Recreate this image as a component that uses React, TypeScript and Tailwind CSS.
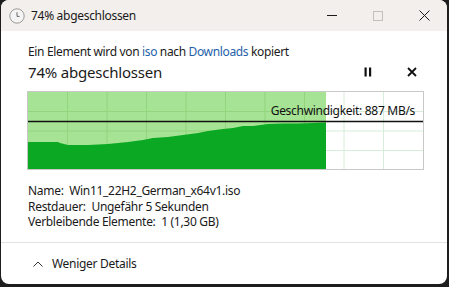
import React from "react";

const font = { fontFamily: '"Segoe UI", "Noto Sans", sans-serif' };

function Chart() {
  const W = 395;
  const H = 77;
  const verts = [39.5, 79, 118.5, 158, 197.5, 237, 276.5, 316, 355.5];
  const horiz = [19.5, 39, 58.5];
  const pts: [number, number][] = [
    [0, 50], [30, 50], [32, 51], [40, 53], [60, 53], [80, 52], [100, 50], [115, 48], [125, 46], [140, 45], [155, 43], [170, 41], [180, 39], [195, 37], [205, 36], [215, 34], [225, 34], [240, 32], [255, 31.5], [270, 31.5], [285, 31], [298, 30.5],
  ];
  const d =
    "M0 " + H + " " + pts.map(([x, y]) => `L${x} ${y}`).join(" ") + ` L298 ${H} Z`;
  return (
    <div className="relative mt-[8px] ml-[26px] h-[79px] w-[397px] border border-[#c8c8c8] bg-white">
      <svg width={W} height={H} className="block">
        <rect x={0} y={0} width={298} height={H} fill="#a6e394" />
        {verts.map((x) => (
          <line key={x} x1={x} y1={0} x2={x} y2={H} stroke={x < 298 ? "#93d47f" : "#d7ecd9"} strokeWidth={1} />
        ))}
        {horiz.map((y) => (
          <g key={y}>
            <line x1={0} y1={y} x2={298} y2={y} stroke="#93d47f" strokeWidth={1} />
            <line x1={298} y1={y} x2={W} y2={y} stroke="#d7ecd9" strokeWidth={1} />
          </g>
        ))}
        <path d={d} fill="#0aa823" />
        <line x1={0} y1={29.5} x2={W} y2={29.5} stroke="#111" strokeWidth={1.3} />
      </svg>
      <div className="absolute right-[8px] top-[12px] text-[12px] leading-[14px] tracking-[-0.3px] text-[#111]" style={font}>
        Geschwindigkeit: 887 MB/s
      </div>
    </div>
  );
}

export default function App() {
  return (
    <div className="h-[287px] w-[449px] bg-[#1d1d1d] pl-[1px] pr-[2px] pb-[3px]" style={font}>
      <div className="flex h-full flex-col overflow-hidden rounded-[8px] bg-white text-[#1a1a1a]">
        {/* title bar */}
        <div className="flex h-[31px] items-center bg-[#f3efec] pl-[8px]">
          <svg width="16" height="16" viewBox="0 0 16 16" className="mr-[6px]">
            <circle cx="8" cy="8" r="7.2" fill="#f4f4f4" stroke="#9a9a9a" strokeWidth="1" />
            <path d="M8 4.2V8.4H10.6" fill="none" stroke="#6a6a6a" strokeWidth="1" />
          </svg>
          <span className="text-[12px] tracking-[-0.3px] text-[#1a1a1a]">74% abgeschlossen</span>
          <div className="ml-auto flex h-full items-center">
            <div className="flex h-full w-[46px] items-center justify-center">
              <div className="h-[1px] w-[10px] bg-[#1a1a1a]" />
            </div>
            <div className="flex h-full w-[46px] items-center justify-center">
              <div className="h-[10px] w-[10px] border border-[#c4c0be]" />
            </div>
            <div className="flex h-full w-[46px] items-center justify-center">
              <svg width="11" height="11" viewBox="0 0 11 11">
                <path d="M0.5 0.5L10.5 10.5M10.5 0.5L0.5 10.5" stroke="#1a1a1a" strokeWidth="1" />
              </svg>
            </div>
          </div>
        </div>

        {/* content */}
        <div className="flex flex-1 flex-col">
          <div className="mt-[13px] pl-[27px] text-[12px] leading-[16px] tracking-[-0.35px]">
            Ein Element wird von <span className="text-[#1f5faa]">iso</span> nach{" "}
            <span className="text-[#1f5faa]">Downloads</span> kopiert
          </div>
          <div className="mt-[1px] flex items-center pl-[27px] pr-[30px]">
            <span className="text-[15px] leading-[22px] tracking-[-0.2px]">74% abgeschlossen</span>
            <div className="ml-auto flex items-center gap-[35px]">
              <svg width="8" height="10" viewBox="0 0 8 10">
                <rect x="0.5" y="0.5" width="2.2" height="9" fill="#111" />
                <rect x="5" y="0.5" width="2.2" height="9" fill="#111" />
              </svg>
              <svg width="10" height="10" viewBox="0 0 10 10">
                <path d="M1 1L9 9M9 1L1 9" stroke="#111" strokeWidth="1.8" />
              </svg>
            </div>
          </div>
          <Chart />
          <div className="mt-[13px] pl-[27px] text-[12px] leading-[15.5px] tracking-[-0.3px]">
            <div>Name:&nbsp; Win11_22H2_German_x64v1.iso</div>
            <div>Restdauer:&nbsp; Ungefähr 5 Sekunden</div>
            <div>Verbleibende Elemente:&nbsp; 1 (1,30 GB)</div>
          </div>
        </div>

        <div className="flex h-[42px] items-center border-t border-[#e3e3e3] pl-[31px]">
          <svg width="12" height="8" viewBox="0 0 12 8" className="mr-[8px]">
            <path d="M1.5 6.5L6 2L10.5 6.5" fill="none" stroke="#333" strokeWidth="1" />
          </svg>
          <span className="text-[12px] tracking-[-0.3px]">Weniger Details</span>
        </div>
      </div>
    </div>
  );
}
